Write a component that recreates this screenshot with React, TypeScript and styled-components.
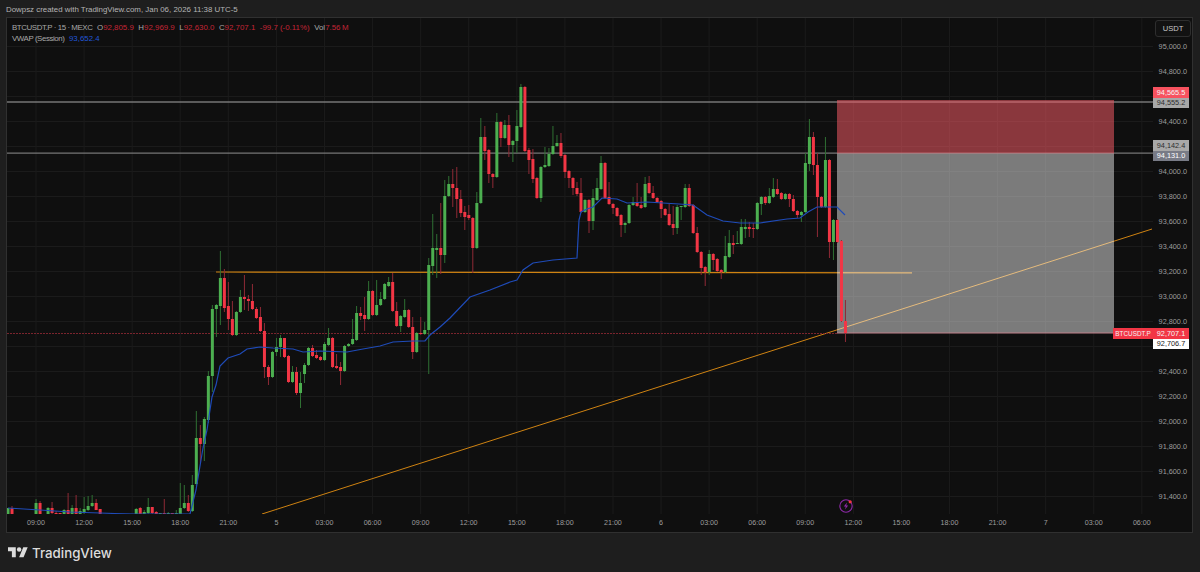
import React from "react";
import styled, { createGlobalStyle } from "styled-components";

const GlobalStyle = createGlobalStyle`
  html, body {
    margin: 0;
    background: #1e1e1e;
    font-family: "Liberation Sans", Arial, sans-serif;
  }
`;

const Page = styled.div`
  width: 1200px;
  height: 572px;
  display: flex;
  flex-direction: column;
  overflow: hidden;
  background: #1e1e1e;
`;
const TitleBar = styled.div`
  height: 17px;
  box-sizing: border-box;
  padding: 2px 0 0 6px;
  display: flex;
  align-items: center;
  font-size: 7.9px;
  color: #b4b4b4;
`;
const ChartPanel = styled.div`
  margin: 0 7px 0 6px;
  border: 1px solid #303030;
  background: #0f0f0f;
  display: flex;
  flex-direction: column;
`;
const MainRow = styled.div`
  display: flex;
  height: 496px;
`;
const PlotArea = styled.div`
  position: relative;
  width: 1146px;
  flex: none;
`;
const Plot = styled.svg`
  display: block;
`;
const Legend = styled.div`
  position: absolute;
  top: 4px;
  left: 5px;
  display: flex;
  flex-direction: column;
  font-size: 7.9px;
  line-height: 11px;
  color: #a8a8a8;
`;
const LegendRow = styled.div`
  display: flex;
  gap: 4.5px;
`;
const LegendName = styled.span`
  letter-spacing: -0.42px;
`;
const LegendValue = styled.span<{ $color: string }>`
  color: ${(p) => p.$color};
`;
const PriceAxis = styled.div`
  position: relative;
  flex: 1;
  box-sizing: border-box;
  padding: 15.5px 5px 0 0;
  display: flex;
  flex-direction: column;
`;
const PriceLabel = styled.div`
  height: 25px;
  flex: none;
  display: flex;
  align-items: center;
  justify-content: flex-end;
  font-size: 7.3px;
  color: #9e9e9e;
`;
const UnitButton = styled.div`
  position: absolute;
  top: 2px;
  left: 2px;
  width: 36px;
  height: 17px;
  box-sizing: border-box;
  border: 1px solid #2e2e2e;
  border-radius: 3px;
  background: #121212;
  display: flex;
  align-items: center;
  justify-content: center;
  font-size: 7.6px;
  color: #c8c8c8;
`;
const PriceTag = styled.div<{ $top: number; $bg: string; $fg: string }>`
  position: absolute;
  top: ${(p) => p.$top}px;
  left: 0;
  width: 36px;
  height: 10.5px;
  display: flex;
  align-items: center;
  justify-content: center;
  background: ${(p) => p.$bg};
  color: ${(p) => p.$fg};
  font-size: 7.3px;
`;
const SymbolTag = styled.div`
  position: absolute;
  top: 310px;
  right: 100%;
  width: 40px;
  height: 10.5px;
  display: flex;
  align-items: center;
  justify-content: center;
  background: #f23645;
  color: #f4f4f4;
  font-size: 6.4px;
`;
const TimeAxis = styled.div`
  height: 18px;
  display: flex;
  padding-left: 4.96px;
`;
const TimeLabel = styled.div`
  width: 48.08px;
  flex: none;
  display: flex;
  align-items: center;
  justify-content: center;
  font-size: 7.1px;
  color: #9e9e9e;
`;
const Footer = styled.div`
  flex: 1;
  display: flex;
  align-items: center;
  gap: 4px;
  padding-left: 8px;
`;
const Wordmark = styled.span`
  font-family: Inter, "Liberation Sans", sans-serif;
  font-weight: 500;
  font-size: 13.3px;
  color: #dcdcdc;
`;

type Candle = [number, number, number, number, number, "g" | "r"];

// x, body top, body bottom, wick top, wick bottom, colour (all in page pixels)
const candles: Candle[] = [
  [8, 508, 514, 508, 514, "g"], [12, 508, 514, 506, 514, "r"],
  [36, 503, 514, 499, 514, "g"], [40, 503, 514, 501, 514, "r"],
  [48, 508, 514, 507, 514, "g"], [52, 508, 513, 502, 514, "r"], [56, 513, 514, 511, 514, "r"], [60, 513, 514, 513, 514, "r"],
  [64, 510, 514, 509, 514, "g"], [68, 510, 514, 493, 514, "r"], [72, 508, 514, 505, 514, "g"], [76, 508, 514, 495, 514, "r"],
  [80, 511, 514, 508, 514, "g"], [84, 509, 513, 497, 514, "g"], [88, 506, 510, 496, 511, "g"], [92, 503, 506, 495, 507, "g"],
  [96, 503, 510, 499, 510, "r"], [100, 509, 514, 509, 514, "r"],
  [136, 509, 514, 508, 514, "g"], [140, 508, 514, 507, 514, "r"], [144, 512, 514, 510, 514, "g"], [148, 507, 513, 498, 514, "g"],
  [152, 507, 513, 507, 514, "r"], [156, 512, 514, 511, 514, "r"], [160, 513, 514, 513, 514, "g"], [164, 513, 514, 499, 514, "r"],
  [168, 513, 514, 512, 514, "g"], [172, 513, 514, 513, 514, "r"], [176, 513, 514, 510, 514, "g"],
  [180, 508, 514, 483, 514, "g"], [184, 503, 508, 485, 509, "g"], [188, 503, 511, 495, 512, "r"], [192, 485, 511, 475, 512, "g"],
  [196, 438, 484, 411, 486, "g"], [200, 438, 444, 425, 463, "r"], [204, 419, 444, 417, 461, "g"],
  [208, 376, 420, 371, 423, "g"], [212, 309, 376, 305, 392, "g"], [216, 305, 309, 304, 337, "g"],
  [220, 278, 306, 251, 325, "g"], [224, 278, 308, 269, 312, "r"], [228, 306, 319, 282, 330, "r"], [232, 319, 335, 301, 336, "r"],
  [236, 312, 335, 311, 336, "g"], [240, 297, 312, 290, 313, "g"], [244, 297, 299, 275, 310, "r"], [248, 299, 301, 295, 311, "r"],
  [252, 301, 309, 284, 310, "r"], [256, 309, 318, 307, 319, "r"], [260, 317, 331, 307, 332, "r"], [264, 331, 367, 323, 378, "r"],
  [268, 367, 377, 365, 385, "r"], [272, 352, 377, 351, 378, "g"], [276, 347, 352, 338, 356, "g"], [280, 338, 347, 335, 357, "g"],
  [284, 338, 357, 338, 358, "r"], [288, 356, 382, 355, 383, "r"], [292, 372, 382, 366, 383, "g"], [296, 372, 393, 367, 395, "r"],
  [300, 383, 393, 372, 408, "g"], [304, 365, 374, 363, 383, "g"], [308, 348, 365, 347, 366, "g"], [312, 348, 356, 345, 357, "r"],
  [316, 355, 358, 350, 359, "r"], [320, 357, 360, 356, 361, "r"], [324, 344, 360, 342, 361, "g"], [328, 338, 345, 328, 346, "g"],
  [332, 338, 367, 337, 368, "r"], [336, 366, 368, 354, 369, "r"], [340, 367, 371, 362, 385, "r"], [344, 346, 371, 345, 372, "g"],
  [348, 344, 346, 343, 347, "g"], [352, 339, 344, 319, 345, "g"], [356, 313, 340, 306, 341, "g"], [360, 313, 316, 307, 320, "r"],
  [364, 315, 319, 297, 331, "r"], [368, 291, 319, 281, 320, "g"], [372, 291, 315, 290, 316, "r"], [376, 305, 315, 280, 316, "g"],
  [380, 299, 305, 292, 306, "g"], [384, 284, 299, 283, 300, "g"], [388, 282, 286, 277, 287, "g"], [392, 282, 311, 273, 312, "r"],
  [396, 311, 326, 302, 327, "r"], [400, 316, 326, 315, 332, "g"], [404, 310, 317, 299, 318, "g"], [408, 310, 327, 309, 328, "r"],
  [412, 327, 352, 317, 359, "r"], [416, 333, 352, 332, 353, "g"], [420, 333, 334, 317, 335, "r"], [424, 330, 334, 322, 335, "g"],
  [428, 265, 330, 258, 374, "g"], [432, 248, 266, 214, 275, "g"], [436, 248, 250, 234, 278, "g"], [440, 248, 255, 203, 274, "r"],
  [444, 196, 255, 180, 263, "g"], [448, 184, 196, 176, 197, "g"], [452, 184, 188, 169, 207, "r"], [456, 188, 199, 167, 218, "r"],
  [460, 199, 213, 190, 217, "r"], [464, 212, 217, 206, 230, "r"], [468, 215, 218, 205, 220, "r"], [472, 218, 248, 217, 273, "r"],
  [476, 203, 248, 192, 249, "g"], [480, 137, 203, 118, 204, "g"], [484, 137, 151, 126, 160, "r"], [488, 150, 174, 149, 183, "r"],
  [492, 174, 177, 173, 188, "r"], [496, 122, 177, 113, 178, "g"], [500, 122, 138, 121, 147, "r"], [504, 125, 138, 120, 139, "g"],
  [508, 125, 145, 115, 157, "r"], [512, 141, 145, 140, 162, "g"], [516, 126, 141, 110, 153, "g"], [520, 87, 127, 84, 128, "g"],
  [524, 87, 151, 86, 152, "r"], [528, 150, 160, 148, 174, "r"], [532, 159, 179, 149, 183, "r"], [536, 178, 198, 177, 199, "r"],
  [540, 167, 198, 166, 202, "g"], [544, 165, 167, 147, 168, "g"], [548, 154, 166, 148, 167, "g"], [552, 146, 154, 126, 155, "g"],
  [556, 143, 146, 135, 147, "g"], [560, 143, 156, 133, 158, "r"], [564, 155, 172, 154, 178, "r"], [568, 171, 178, 170, 188, "r"],
  [572, 178, 188, 177, 195, "r"], [576, 188, 194, 182, 196, "r"], [580, 193, 212, 178, 213, "r"], [584, 200, 212, 199, 213, "g"],
  [588, 200, 221, 199, 233, "r"], [592, 198, 221, 189, 230, "g"], [596, 188, 200, 178, 201, "g"], [600, 163, 189, 156, 190, "g"],
  [604, 163, 198, 162, 199, "r"], [608, 197, 204, 182, 205, "r"], [612, 204, 208, 203, 214, "r"], [616, 208, 216, 207, 217, "r"],
  [620, 215, 225, 214, 237, "r"], [624, 223, 225, 222, 233, "g"], [628, 205, 223, 204, 224, "g"], [632, 202, 205, 197, 206, "g"],
  [636, 202, 206, 183, 207, "r"], [640, 205, 208, 197, 209, "r"], [644, 184, 207, 177, 208, "g"], [648, 183, 193, 176, 194, "r"],
  [652, 193, 198, 186, 199, "r"], [656, 198, 202, 197, 203, "r"], [660, 201, 209, 200, 218, "r"], [664, 209, 215, 208, 216, "r"],
  [668, 214, 225, 204, 226, "r"], [672, 224, 228, 206, 235, "r"], [676, 207, 228, 205, 234, "g"], [680, 206, 207, 206, 220, "g"],
  [684, 188, 207, 184, 208, "g"], [688, 188, 206, 184, 207, "r"], [692, 205, 233, 204, 234, "r"], [696, 233, 252, 227, 253, "r"],
  [700, 252, 268, 251, 275, "r"], [704, 267, 272, 266, 286, "r"], [708, 254, 272, 250, 275, "g"], [712, 254, 260, 253, 270, "r"],
  [716, 259, 271, 258, 272, "r"], [720, 270, 272, 269, 279, "r"], [724, 256, 272, 236, 273, "g"], [728, 243, 257, 230, 258, "g"],
  [732, 243, 245, 235, 254, "r"], [736, 243, 244, 231, 244, "g"], [740, 227, 244, 219, 245, "g"], [744, 227, 229, 219, 238, "g"],
  [748, 227, 229, 222, 237, "r"], [752, 228, 229, 223, 238, "r"], [756, 203, 229, 202, 230, "g"], [760, 197, 204, 196, 215, "g"],
  [764, 197, 203, 196, 205, "r"], [768, 196, 203, 188, 204, "g"], [772, 189, 197, 178, 198, "g"], [776, 189, 194, 179, 195, "r"],
  [780, 193, 199, 192, 200, "r"], [784, 194, 199, 193, 200, "g"], [788, 194, 199, 193, 207, "r"], [792, 199, 211, 195, 212, "r"],
  [796, 211, 215, 210, 218, "r"], [800, 212, 215, 211, 222, "g"], [804, 163, 212, 153, 213, "g"], [808, 137, 164, 119, 171, "g"],
  [812, 137, 165, 132, 175, "r"], [816, 165, 197, 153, 237, "r"], [820, 197, 207, 196, 208, "r"], [824, 160, 207, 137, 208, "g"],
  [828, 160, 242, 159, 258, "r"], [832, 220, 242, 219, 260, "g"], [836, 220, 242, 219, 243, "r"], [840, 241, 321, 240, 322, "r"],
  [844, 321, 333, 300, 342, "r"],
];

const xOf = (x: number) => 8 + (x - 8) * 1.00175;

const vwap =
  "8,508 40,510 70,512 100,513 115,513.5 135,514 190,514 196,490 203,448 207,430 210,410 212,397 216,385 220,366 228,358 240,354 " +
  "247,349 260,347 273,348 293,349 303,352 320,351 347,352 363,349 380,346 393,342 413,341 425,341 430,335 440,327 450,318 470,297 " +
  "490,290 510,282 517,280 523,270 533,263 553,260 577,258 579,220 581,212 587,209 593,207 602,198 617,199 627,203 647,202 663,203 " +
  "679,204 693,205 707,215 723,221 740,223 760,223 787,219 800,218 808,212 817,207 837,207 845,215";

const priceLabels = [
  "95,000.0", "94,800.0", "", "94,400.0", "", "94,000.0", "93,800.0", "93,600.0", "93,400.0", "93,200.0",
  "93,000.0", "92,800.0", "", "92,400.0", "92,200.0", "92,000.0", "91,800.0", "91,600.0", "91,400.0",
];
const timeLabels = [
  "09:00", "12:00", "15:00", "18:00", "21:00", "5", "03:00", "06:00", "09:00", "12:00", "15:00", "18:00",
  "21:00", "6", "03:00", "06:00", "09:00", "12:00", "15:00", "18:00", "21:00", "7", "03:00", "06:00",
];
const RED_TEXT = "#c42536";

const ChartDrawing = () => (
  <Plot width={1146} height={496} viewBox="7 18 1146 496">
    <g stroke="#1b1b1b" strokeWidth={1}>
      {priceLabels.map((_, i) => (
        <line key={i} x1={7} x2={1153} y1={46.5 + i * 25} y2={46.5 + i * 25} />
      ))}
      {timeLabels.map((_, i) => (
        <line key={i} x1={36 + i * 48.08} x2={36 + i * 48.08} y1={18} y2={514} />
      ))}
    </g>
    {/* levels sit under the position box, which tints them */}
    <line x1={7} x2={1153} y1={102} y2={102} stroke="#767676" strokeWidth={1.3} />
    <line x1={7} x2={1153} y1={153.2} y2={153.2} stroke="#767676" strokeWidth={1.3} />
    <line x1={216} x2={912} y1={272} y2={272.8} stroke="#cf8312" strokeWidth={1.2} />
    <line x1={262} x2={1152} y1={514} y2={229} stroke="#cf8312" strokeWidth={1} />
    <line x1={7} x2={837} y1={333.5} y2={333.5} stroke="#7a242d" strokeDasharray="2 1" />
    <rect x={837} y={100} width={277} height={53.5} fill="rgb(240, 90, 100)" fillOpacity={0.55} />
    <rect x={837} y={153.5} width={277} height={179.5} fill="#ffffff" fillOpacity={0.45} />
    <line x1={837} x2={1114} y1={333} y2={333} stroke="#c0808a" />
    {candles.map(([x, top, bottom, high, low, kind], i) => (
      <g key={i}>
        <line
          x1={xOf(x)}
          x2={xOf(x)}
          y1={high}
          y2={low}
          stroke={kind === "g" ? "#2f7033" : "#8f2a36"}
          strokeWidth={1}
        />
        <rect
          x={xOf(x) - 1.5}
          y={top}
          width={3}
          height={Math.max(bottom - top, 1)}
          fill={kind === "g" ? "#4caf50" : "#f23645"}
        />
      </g>
    ))}
    <polyline points={vwap} fill="none" stroke="#1f4bb8" strokeWidth={1.2} />
    <g>
      <circle cx={846} cy={506} r={6.2} fill="#0f0f0f" stroke="#8e2aa8" strokeWidth={1.1} />
      <path d="M847 502.5 843.8 506.6h2l-.8 3 3.2-4.1h-2z" fill="#8e2aa8" />
      <circle cx={850.2} cy={501.8} r={1.6} fill="#f23645" />
    </g>
  </Plot>
);

const Logo = () => (
  <svg width={20} height={10.5} viewBox="0 4 36 18" fill="#dcdcdc">
    <path d="M14 22H7V11H0V4h14v18zM28 22h-8l7.5-18h8L28 22z" />
    <circle cx={20} cy={8} r={4} />
  </svg>
);

export default function App() {
  return (
    <Page>
      <GlobalStyle />
      <TitleBar>Dowpsz created with TradingView.com, Jan 06, 2026 11:38 UTC-5</TitleBar>
      <ChartPanel>
        <MainRow>
          <PlotArea>
            <ChartDrawing />
            <Legend>
              <LegendRow>
                <LegendName>BTCUSDT.P · 15 · MEXC</LegendName>
                <span>O<LegendValue $color={RED_TEXT}>92,805.9</LegendValue></span>
                <span>H<LegendValue $color={RED_TEXT}>92,969.9</LegendValue></span>
                <span>L<LegendValue $color={RED_TEXT}>92,630.0</LegendValue></span>
                <span>C<LegendValue $color={RED_TEXT}>92,707.1</LegendValue></span>
                <LegendValue $color={RED_TEXT}>-99.7 (-0.11%)</LegendValue>
                <span>Vol<LegendValue $color={RED_TEXT}>7.56{"\u2009"}M</LegendValue></span>
              </LegendRow>
              <LegendRow>
                <LegendName>VWAP (Session)</LegendName>
                <LegendValue $color="#2156d8">93,652.4</LegendValue>
              </LegendRow>
            </Legend>
          </PlotArea>
          <PriceAxis>
            <UnitButton>USDT</UnitButton>
            {priceLabels.map((label, i) => (
              <PriceLabel key={i}>{label}</PriceLabel>
            ))}
            <PriceTag $top={69} $bg="#f7525f" $fg="#f4f4f4">94,565.5</PriceTag>
            <PriceTag $top={79.5} $bg="#a8a8a8" $fg="#2e2e2e">94,555.2</PriceTag>
            <PriceTag $top={122} $bg="#a8a8a8" $fg="#2e2e2e">94,142.4</PriceTag>
            <PriceTag $top={132.5} $bg="#787b86" $fg="#ffffff">94,131.0</PriceTag>
            <SymbolTag>BTCUSDT.P</SymbolTag>
            <PriceTag $top={310} $bg="#f23645" $fg="#f4f4f4">92,707.1</PriceTag>
            <PriceTag $top={320.5} $bg="#ffffff" $fg="#1a1a1a">92,706.7</PriceTag>
          </PriceAxis>
        </MainRow>
        <TimeAxis>
          {timeLabels.map((label, i) => (
            <TimeLabel key={i}>{label}</TimeLabel>
          ))}
        </TimeAxis>
      </ChartPanel>
      <Footer>
        <Logo />
        <Wordmark>TradingView</Wordmark>
      </Footer>
    </Page>
  );
}
